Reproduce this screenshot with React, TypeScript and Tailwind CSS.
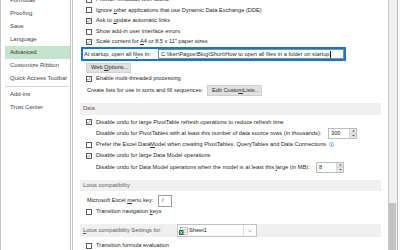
import React from 'react';

const Check = ({ checked }: { checked?: boolean }) => (
  <span className="w-[6px] h-[6px] border border-[#5c5c5c] bg-white flex items-center justify-center shrink-0">
    {checked && (
      <svg viewBox="0 0 4 4" className="w-[4px] h-[4px]">
        <path d="M0.3 2.1 L1.4 3.2 L3.7 0.6" fill="none" stroke="#333" strokeWidth="0.55" />
      </svg>
    )}
  </span>
);

const CheckRow = ({ checked, h = 'h-[10.6px]', children }: { checked?: boolean; h?: string; children: React.ReactNode }) => (
  <div className={`${h} flex items-center pl-[6px] shrink-0`}>
    <Check checked={checked} />
    <span className="ml-[4px] whitespace-nowrap">{children}</span>
  </div>
);

const Spin = ({ value, w }: { value: string; w: string }) => (
  <div className={`${w} h-[11px] border border-[#bdbdbd] bg-white flex items-center shrink-0`}>
    <span className="flex-1 pl-[2px]">{value}</span>
    <div className="w-[7px] h-full flex flex-col border-l border-[#d6d6d6]">
      <div className="flex-1 bg-[#e6e6e6] flex items-center justify-center border-b border-[#d6d6d6]">
        <svg viewBox="0 0 4 2" className="w-[3px] h-[1.5px]"><path d="M0 2 L2 0 L4 2 Z" fill="#555" /></svg>
      </div>
      <div className="flex-1 bg-[#e6e6e6] flex items-center justify-center">
        <svg viewBox="0 0 4 2" className="w-[3px] h-[1.5px]"><path d="M0 0 L2 2 L4 0 Z" fill="#555" /></svg>
      </div>
    </div>
  </div>
);

const Section = ({ h, mt, children }: { h: string; mt: string; children: React.ReactNode }) => (
  <div className={`${h} ${mt} mr-[7px] bg-[#f0f0f0] flex items-center pl-[3px] text-[#5a5a5a] shrink-0`}>
    {children}
  </div>
);

const navItems = ['Formulas', 'Proofing', 'Save', 'Language', 'Advanced', 'Customize Ribbon', 'Quick Access Toolbar'];

export default function App() {
  return (
    <div className="w-[400px] h-[250px] overflow-hidden flex bg-white font-['Liberation_Sans',Arial,sans-serif] leading-none">
      {/* Left nav */}
      <div className="w-[71px] h-full border-l border-r border-[#c6c6c6] shrink-0 text-[6px] text-[#444]">
        <div className="mt-[-6.5px] pl-[4px]">
          {navItems.map((item) => (
            <div
              key={item}
              className={`h-[13px] flex items-center pl-[5px] whitespace-nowrap ${item === 'Advanced' ? 'bg-[#c5e4ce] text-[#333]' : ''}`}
            >
              {item}
            </div>
          ))}
          <div className="mt-[1.5px] mr-[1px] h-[1px] bg-[#d4d4d4]" />
          <div className="h-[13px] flex items-center pl-[5px]">Add-ins</div>
          <div className="h-[13px] flex items-center pl-[5px]">Trust Center</div>
        </div>
      </div>

      {/* Content */}
      <div className="ml-[1px] w-[316px] h-full border-l border-[#c6c6c6] shrink-0 text-[5.7px] text-[#262626] pl-[7px] flex flex-col">
        <div className="mt-[-5.5px]" />
        <CheckRow>Provide feedback with sound</CheckRow>
        <CheckRow>Ignore <span className="underline">o</span>ther applications that use Dynamic Data Exchange (DDE)</CheckRow>
        <CheckRow checked>Ask to <span className="underline">u</span>pdate automatic links</CheckRow>
        <CheckRow>Show add-in user interface errors</CheckRow>
        <CheckRow checked>Scale content for <span className="underline">A</span>4 or 8.5 x 11&quot; paper sizes</CheckRow>

        {/* Startup folder */}
        <div className="ml-[1px] w-[265px] h-[14px] border-2 border-[#0a7ad6] flex items-center pl-[1px] shrink-0">
          <span className="w-[74px] shrink-0 whitespace-nowrap">At startup, open all fi<span className="underline">l</span>es in:</span>
          <div className="flex-1 h-[10px] border border-[#8a8a8a] flex items-center pl-[2px] whitespace-nowrap overflow-hidden">
            C:\Iker\Pagos\Blog\Short\How to open all files in a folder on startup
            <span className="ml-[0.5px] w-[0.6px] h-[7px] bg-[#111]" />
          </div>
        </div>

        <div className="ml-[6px] mt-[1.5px] w-[45px] h-[10px] bg-[#e1e1e1] border border-[#d2d2d2] flex items-center pl-[4px] shrink-0 whitespace-nowrap">
          Web <span className="underline ml-[1.5px]">O</span>ptions...
        </div>

        <CheckRow checked h="h-[11px] mt-[0.5px]">Enable multi-threaded processing</CheckRow>

        <div className="h-[12px] flex items-center pl-[7px] shrink-0">
          <span className="w-[120px] shrink-0 whitespace-nowrap">Create lists for use in sorts and fill sequences:</span>
          <div className="w-[55px] h-[10.5px] bg-[#e1e1e1] border border-[#cfcfcf] flex items-center pl-[4px] whitespace-nowrap">
            Edit Custo<span className="underline">m</span> Lists...
          </div>
        </div>

        <Section h="h-[11.5px]" mt="mt-[7px]">Data</Section>

        <CheckRow checked h="h-[11px] mt-[2px]">Disable undo for large PivotTable refresh operations to reduce refresh time</CheckRow>
        <div className="h-[11.5px] flex items-center pl-[16px] shrink-0">
          <span className="w-[232px] shrink-0 whitespace-nowrap">Disable undo for PivotTables with at least this number of data source rows (in thousands):</span>
          <Spin value="300" w="w-[29px]" />
        </div>
        <CheckRow h="h-[11px]">
          <span className="inline-flex items-center">
            Prefer the Excel Data <span className="underline">M</span>odel when creating PivotTables, QueryTables and Data Connections
            <svg viewBox="0 0 10 10" className="ml-[3px] w-[5px] h-[5px]">
              <circle cx="5" cy="5" r="4.3" fill="none" stroke="#2f7fd0" strokeWidth="1" />
              <rect x="4.4" y="4.2" width="1.2" height="3.5" fill="#2f7fd0" />
              <rect x="4.4" y="2.3" width="1.2" height="1.2" fill="#2f7fd0" />
            </svg>
          </span>
        </CheckRow>
        <CheckRow checked h="h-[11px]">Disable undo for large Data Model operations</CheckRow>
        <div className="h-[12px] flex items-center pl-[16px] shrink-0">
          <span className="w-[220px] shrink-0 whitespace-nowrap">Disable undo for Data Model operations when the model is at least this <span className="underline">l</span>arge (in MB):</span>
          <Spin value="8" w="w-[28px]" />
        </div>

        <Section h="h-[11.5px]" mt="mt-[6.5px]">Lotus compatibility</Section>

        <div className="h-[12px] mt-[3.5px] flex items-center pl-[7px] shrink-0">
          <span className="w-[71px] shrink-0 whitespace-nowrap">Microsoft Excel <span className="underline">m</span>enu key:</span>
          <div className="w-[14px] h-[12px] border border-[#9a9a9a] bg-white flex items-center pl-[3px]">/</div>
        </div>
        <CheckRow h="h-[10px]">Transition navigation <span className="underline">k</span>eys</CheckRow>

        <Section h="h-[13px]" mt="mt-[7.5px]">
          <span className="w-[94px] shrink-0 whitespace-nowrap"><span className="underline">L</span>otus compatibility Settings for:</span>
          <div className="w-[80px] h-full border border-[#c2c2c2] bg-white flex items-center">
            <svg viewBox="0 0 9 8" className="ml-[1px] w-[9px] h-[8px] shrink-0">
              <rect x="1.5" y="0.5" width="7" height="7" fill="#fff" stroke="#8a8a8a" strokeWidth="0.6" />
              <path d="M3.5 2.5 H7.5 M3.5 4 H7.5 M3.5 5.5 H7.5" stroke="#9a9a9a" strokeWidth="0.5" />
              <rect x="0" y="3" width="4.5" height="5" fill="#1d7044" />
              <path d="M1 4 L3.5 7 M3.5 4 L1 7" stroke="#fff" strokeWidth="0.7" />
            </svg>
            <span className="ml-[1px] flex-1 text-[#262626]">Sheet1</span>
            <div className="w-[13px] h-full border-l border-[#e0e0e0] flex items-center justify-center">
              <svg viewBox="0 0 6 4" className="w-[4px] h-[2.5px]">
                <path d="M0.5 0.5 L3 3 L5.5 0.5" fill="none" stroke="#555" strokeWidth="0.8" />
              </svg>
            </div>
          </div>
        </Section>

        <CheckRow h="h-[11px] mt-[3px]">Transition formula evaluation</CheckRow>
      </div>

      {/* Scrollbar */}
      <div className="w-[9px] h-full bg-[#f0f0f0] border-l border-[#c8c8c8] shrink-0 flex flex-col">
        <div className="mt-[203px] w-[7px] flex-1 bg-[#c2c2c2]" />
      </div>
      <div className="w-[3px] h-full border-l border-[#bdbdbd] bg-[#fafafa] shrink-0" />
    </div>
  );
}
